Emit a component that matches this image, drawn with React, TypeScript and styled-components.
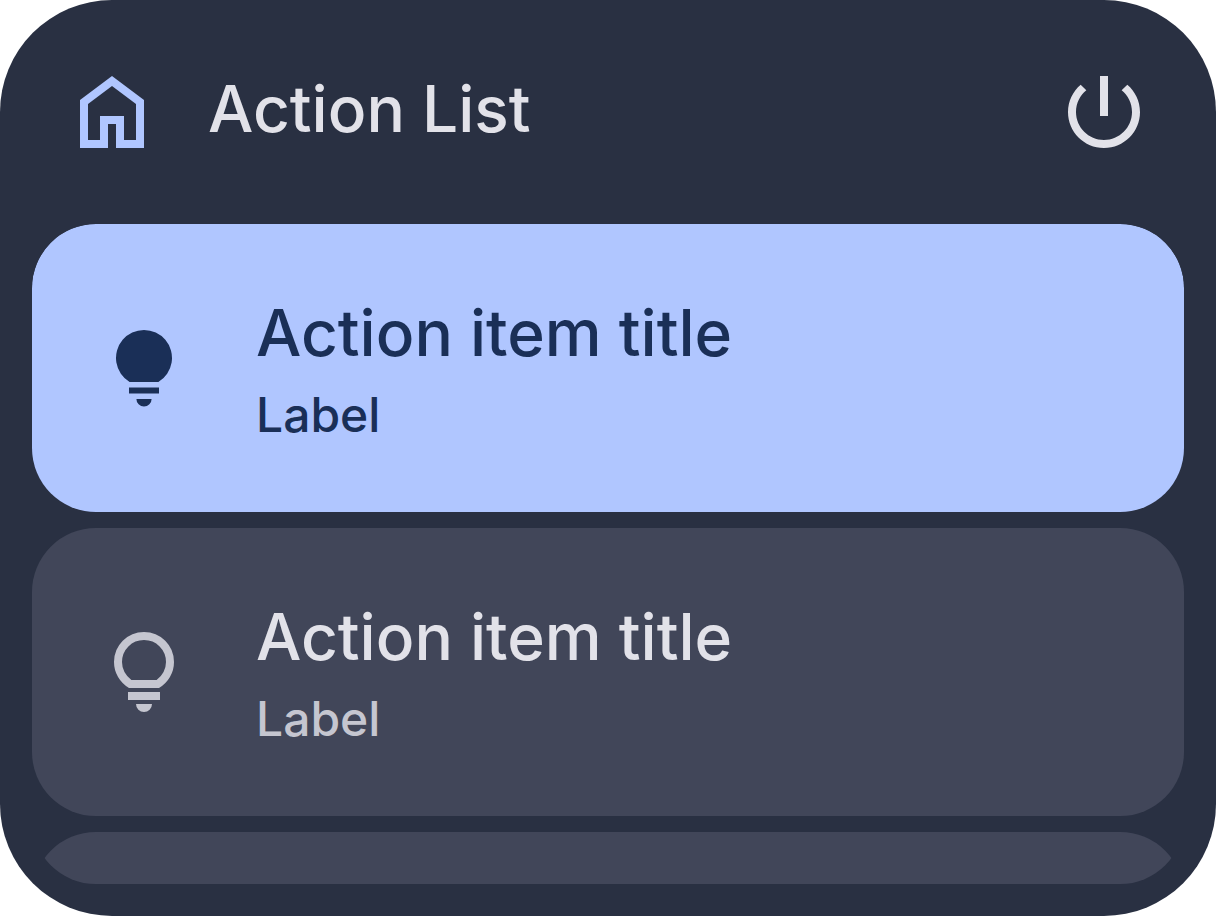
import React from "react";
import styled, { createGlobalStyle } from "styled-components";

const GlobalStyle = createGlobalStyle`
  *, *::before, *::after { box-sizing: border-box; }
  body { margin: 0; background: #ffffff; font-family: Inter, "Liberation Sans", sans-serif; }
`;

const Widget = styled.main`
  display: flex;
  flex-direction: column;
  height: 100vh;
  padding: 0 32px 32px;
  border-radius: 112px;
  background: #293042;
  overflow: hidden;
`;

const Header = styled.header`
  display: flex;
  align-items: flex-start;
  flex: none;
  gap: 48px;
  padding: 64px 32px;
`;

const Heading = styled.h1`
  flex: 1;
  margin: 0;
  color: #e2e2e9;
  font-size: 64px;
  font-weight: 500;
  line-height: 90px;
`;

const Icon = styled.svg`
  display: block;
  flex: none;
  width: 96px;
  height: 96px;
  fill: currentColor;
`;

const HomeIcon = styled(Icon)`
  color: #b0c6ff;
`;

const PowerButton = styled.button`
  flex: none;
  padding: 0;
  border: 0;
  background: none;
  color: #e2e2e9;
  cursor: pointer;
`;

const ActionList = styled.ul`
  display: flex;
  flex-direction: column;
  flex: 1;
  min-height: 0;
  gap: 16px;
  margin: 0;
  padding: 0;
  border-radius: 64px;
  list-style: none;
  overflow: hidden;
`;

const ActionRow = styled.li`
  flex: none;
`;

const ActionButton = styled.button<{ $active?: boolean }>`
  display: flex;
  align-items: center;
  gap: 64px;
  width: 100%;
  min-height: 288px;
  padding: 64px;
  border: 0;
  border-radius: 64px;
  background: ${(p) => (p.$active ? "#b0c6ff" : "#414659")};
  color: ${(p) => (p.$active ? "#1a2f57" : "#c5c6d0")};
  font-family: inherit;
  text-align: left;
  cursor: pointer;
`;

const ActionText = styled.span`
  display: flex;
  flex-direction: column;
  gap: 4px;
  font-weight: 500;
`;

const ActionTitle = styled.span<{ $active?: boolean }>`
  color: ${(p) => (p.$active ? "inherit" : "#e2e2e9")};
  font-size: 64px;
  line-height: 90px;
`;

const ActionLabel = styled.span`
  font-size: 48px;
  line-height: 66px;
`;

const BulbOn = () => (
  <Icon viewBox="0 0 24 24" aria-hidden="true">
    <path d="M8.4 15.5A7 7 0 1 1 15.6 15.5ZM8.25 16.85h7.5v1.55h-7.5ZM10.1 19.75h3.8a1.9 1.9 0 0 1-3.8 0Z" />
  </Icon>
);

const BulbOff = () => (
  <Icon viewBox="0 0 24 24" aria-hidden="true">
    <path d="M12 22q-.825 0-1.412-.587T10 20h4q0 .825-.587 1.413T12 22m-4-3v-2h8v2zm.25-3q-1.725-1.025-2.738-2.75T4.5 9.5q0-3.125 2.188-5.312T12 2t5.313 2.188T19.5 9.5q0 2.025-1.012 3.75T15.75 16zm.6-2h6.3q1.125-.8 1.738-1.975T17.5 9.5q0-2.3-1.6-3.9T12 4T8.1 5.6T6.5 9.5q0 1.35.613 2.525T8.85 14" />
  </Icon>
);

type Action = { title?: string; label?: string; active?: boolean };

const actions: Action[] = [
  { title: "Action item title", label: "Label", active: true },
  { title: "Action item title", label: "Label" },
  {},
];

export default function App() {
  return (
    <>
      <GlobalStyle />
      <Widget>
        <Header>
          <HomeIcon viewBox="0 0 24 24" aria-hidden="true">
            <path d="M6 19h3v-6h6v6h3v-9l-6-4.5L6 10zm-2 2V9l8-6 8 6v12h-7v-6h-2v6z" />
          </HomeIcon>
          <Heading>Action List</Heading>
          <PowerButton type="button" aria-label="Power">
            <Icon viewBox="0 0 24 24" aria-hidden="true">
              <path d="M13 3h-2v10h2V3zm4.83 2.17l-1.42 1.42C17.99 7.86 19 9.81 19 12c0 3.87-3.13 7-7 7s-7-3.13-7-7c0-2.19 1.01-4.14 2.58-5.42L6.17 5.17C4.23 6.82 3 9.26 3 12c0 4.97 4.03 9 9 9s9-4.03 9-9c0-2.74-1.23-5.18-3.17-6.83z" />
            </Icon>
          </PowerButton>
        </Header>
        <ActionList>
          {actions.map(({ title, label, active }, i) => (
            <ActionRow key={i}>
              <ActionButton type="button" $active={active}>
                {title && (
                  <>
                    {active ? <BulbOn /> : <BulbOff />}
                    <ActionText>
                      <ActionTitle $active={active}>{title}</ActionTitle>
                      <ActionLabel>{label}</ActionLabel>
                    </ActionText>
                  </>
                )}
              </ActionButton>
            </ActionRow>
          ))}
        </ActionList>
      </Widget>
    </>
  );
}
